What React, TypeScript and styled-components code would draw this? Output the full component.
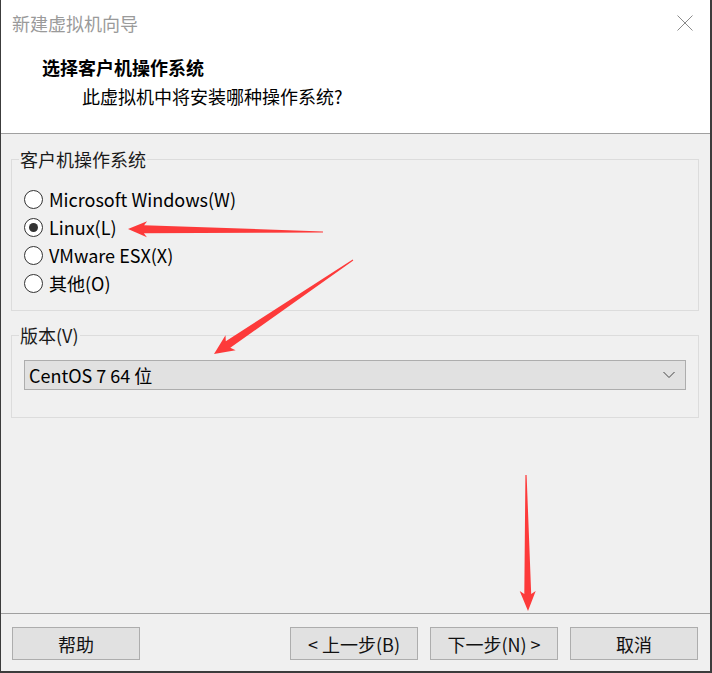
import * as React from 'react';
import styled, { createGlobalStyle } from 'styled-components';

const GlobalStyle = createGlobalStyle`
  html, body {
    margin: 0;
    padding: 0;
    background: #ffffff;
  }
  body {
    font-family: "Noto Sans CJK SC", "Noto Sans", sans-serif;
  }
`;

const Window = styled.div`
  position: relative;
  box-sizing: border-box;
  width: 712px;
  height: 673px;
  display: flex;
  flex-direction: column;
  border-left: 1px solid #3c3c3c;
  border-right: 2px solid #3c3c3c;
  border-bottom: 2px solid #3c3c3c;
  background: #f0f0f0;
  overflow: hidden;
`;

const TitleBar = styled.div`
  height: 45px;
  flex-shrink: 0;
  display: flex;
  align-items: center;
  justify-content: space-between;
  padding: 0 16px 0 11px;
  background: #ffffff;
`;

const TitleText = styled.span`
  font-size: 18px;
  line-height: 24px;
  color: #9a9a9a;
`;

const CloseButton = styled.div`
  width: 18px;
  height: 18px;
  display: flex;
  align-items: center;
  justify-content: center;
`;

const Header = styled.div`
  height: 89px;
  flex-shrink: 0;
  box-sizing: border-box;
  padding-top: 10px;
  background: #ffffff;
  border-bottom: 1px solid #a0a0a0;
`;

const Heading = styled.div`
  padding-left: 41px;
  font-size: 18px;
  line-height: 24px;
  font-weight: 700;
  color: #000;
`;

const SubHeading = styled.div`
  margin-top: 5px;
  padding-left: 81px;
  font-size: 18px;
  line-height: 24px;
  color: #000;
`;

const Body = styled.div`
  flex: 1;
  padding: 0 11px 0 10px;
`;

const Group = styled.fieldset<{ $top: number; $padTop: number; $padBottom: number }>`
  margin: ${(p) => p.$top}px 0 0 0;
  padding: ${(p) => p.$padTop}px 12px ${(p) => p.$padBottom}px 12px;
  border: 1px solid #dcdcdc;
  min-width: 0;
`;

const Legend = styled.legend`
  margin-left: -5px;
  padding: 0 1px;
  font-size: 18px;
  line-height: 24px;
  color: #1a1a1a;
`;

const RadioList = styled.div`
  display: flex;
  flex-direction: column;
`;

const RadioRow = styled.label`
  height: 28px;
  display: flex;
  align-items: center;
  gap: 6px;
  font-size: 18px;
  color: #000;
`;

const RadioCircle = styled.span<{ $checked?: boolean }>`
  box-sizing: border-box;
  width: 19px;
  height: 19px;
  border-radius: 50%;
  border: 1px solid #333333;
  background: #ffffff;
  display: flex;
  align-items: center;
  justify-content: center;
  &::after {
    content: '';
    width: 9px;
    height: 9px;
    border-radius: 50%;
    background: ${(p) => (p.$checked ? '#333333' : 'transparent')};
  }
`;

const Select = styled.div`
  box-sizing: border-box;
  height: 30px;
  display: flex;
  align-items: center;
  justify-content: space-between;
  padding: 0 10px 0 4px;
  background: #e1e1e1;
  border: 1px solid #adadad;
  font-size: 18px;
  color: #000;
`;

const Footer = styled.div`
  height: 58px;
  flex-shrink: 0;
  box-sizing: border-box;
  border-top: 1px solid #a0a0a0;
  display: flex;
  align-items: flex-start;
  padding: 13px 12px 0 11px;
`;

const Spacer = styled.div`
  flex: 1;
`;

const Button = styled.button<{ $gap?: number }>`
  box-sizing: border-box;
  width: 128px;
  height: 33px;
  margin-left: ${(p) => p.$gap ?? 0}px;
  padding: 0;
  background: #e1e1e1;
  border: 1px solid #adadad;
  border-radius: 0;
  font-family: inherit;
  font-size: 18px;
  color: #111;
`;

const Overlay = styled.svg`
  position: absolute;
  left: 0;
  top: 0;
  width: 712px;
  height: 673px;
  pointer-events: none;
`;

type ArrowSpec = {
  x1: number;
  y1: number;
  x2: number;
  y2: number;
  shaft: number;
  headW: number;
  headL: number;
};

const arrows: ArrowSpec[] = [
  { x1: 322, y1: 232, x2: 127, y2: 229, shaft: 8, headW: 16, headL: 16 },
  { x1: 352, y1: 260, x2: 213, y2: 354, shaft: 8, headW: 18, headL: 17 },
  { x1: 525, y1: 475, x2: 527, y2: 611, shaft: 7, headW: 16, headL: 17 },
];

function arrowPoints(a: ArrowSpec) {
  const dx = a.x2 - a.x1;
  const dy = a.y2 - a.y1;
  const len = Math.sqrt(dx * dx + dy * dy);
  const ux = dx / len;
  const uy = dy / len;
  const nx = -uy;
  const ny = ux;
  const bx = a.x2 - ux * a.headL;
  const by = a.y2 - uy * a.headL;
  const wx = bx - ux * 3;
  const wy = by - uy * 3;
  const tail = 0.6;
  const pts = [
    [a.x1 + nx * tail, a.y1 + ny * tail],
    [bx + (nx * a.shaft) / 2, by + (ny * a.shaft) / 2],
    [wx + (nx * a.headW) / 2, wy + (ny * a.headW) / 2],
    [a.x2, a.y2],
    [wx - (nx * a.headW) / 2, wy - (ny * a.headW) / 2],
    [bx - (nx * a.shaft) / 2, by - (ny * a.shaft) / 2],
    [a.x1 - nx * tail, a.y1 - ny * tail],
  ];
  return pts.map((p) => `${p[0].toFixed(1)},${p[1].toFixed(1)}`).join(' ');
}

const osOptions = [
  { label: 'Microsoft Windows(W)', checked: false },
  { label: 'Linux(L)', checked: true },
  { label: 'VMware ESX(X)', checked: false },
  { label: '其他(O)', checked: false },
];

export default function App() {
  return (
    <>
      <GlobalStyle />
      <Window>
        <TitleBar>
          <TitleText>新建虚拟机向导</TitleText>
          <CloseButton>
            <svg width="16" height="16" viewBox="0 0 16 16">
              <path d="M0.5 0.5 L15.5 15.5 M15.5 0.5 L0.5 15.5" stroke="#8a8a8a" strokeWidth="1" fill="none" />
            </svg>
          </CloseButton>
        </TitleBar>
        <Header>
          <Heading>选择客户机操作系统</Heading>
          <SubHeading>此虚拟机中将安装哪种操作系统?</SubHeading>
        </Header>
        <Body>
          <Group $top={13} $padTop={14} $padBottom={13}>
            <Legend>客户机操作系统</Legend>
            <RadioList>
              {osOptions.map((o) => (
                <RadioRow key={o.label}>
                  <RadioCircle $checked={o.checked} />
                  {o.label}
                </RadioRow>
              ))}
            </RadioList>
          </Group>
          <Group $top={12} $padTop={13} $padBottom={27}>
            <Legend>版本(V)</Legend>
            <Select>
              <span>CentOS 7 64 位</span>
              <svg width="12" height="8" viewBox="0 0 12 8">
                <path d="M0.5 1 L6 6.5 L11.5 1" stroke="#444" strokeWidth="1" fill="none" />
              </svg>
            </Select>
          </Group>
        </Body>
        <Footer>
          <Button>帮助</Button>
          <Spacer />
          <Button>&lt; 上一步(B)</Button>
          <Button $gap={12}>下一步(N) &gt;</Button>
          <Button $gap={12}>取消</Button>
        </Footer>
        <Overlay viewBox="0 0 712 673">
          {arrows.map((a, i) => (
            <polygon key={i} points={arrowPoints(a)} fill="#fd3a3a" />
          ))}
        </Overlay>
      </Window>
    </>
  );
}
